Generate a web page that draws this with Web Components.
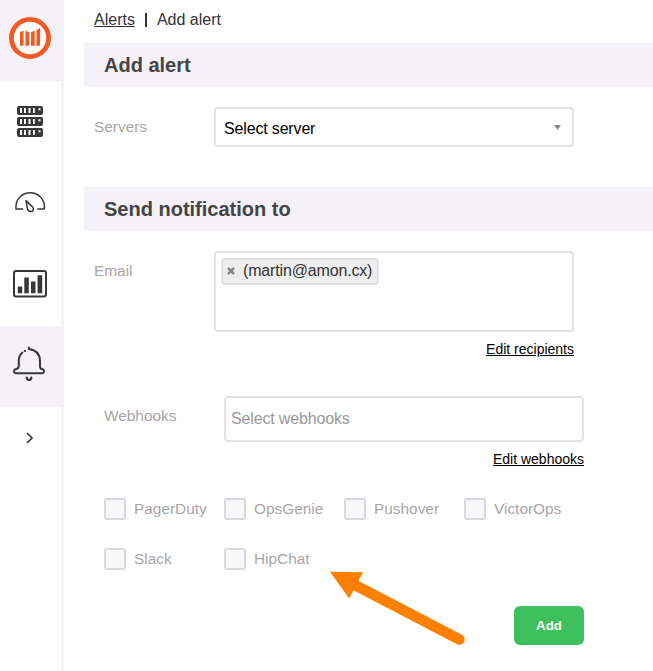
<!DOCTYPE html>
<html lang="en">
<head>
<meta charset="utf-8">
<title>Add alert</title>
<style>
html,body{margin:0;height:100%;background:#fff;overflow:hidden;font-family:"Liberation Sans",Arial,sans-serif;font-size:16px;color:#333}
</style>
</head>
<body>
<alert-app></alert-app>
<script>
const define = (name, html) => {
  const tpl = document.createElement('template');
  tpl.innerHTML = html;
  customElements.define(name, class extends HTMLElement {
    constructor() {
      super();
      this.attachShadow({ mode: 'open' }).appendChild(tpl.content.cloneNode(true));
    }
  });
};

define('nav-item', `
<style>
:host{display:flex;box-sizing:border-box;height:81px;width:61px;padding-right:1px;align-items:center;justify-content:center}
:host([active]){background:#f4f1f9}
:host([tall]){height:83px;padding-bottom:1px}
:host([short]){height:62px}
::slotted(svg){display:block}
</style><slot></slot>`);

define('side-nav', `
<style>
:host{display:flex;flex-direction:column;flex:none;box-sizing:border-box;width:64px;height:671px;border-right:3px solid #f4f1f9}
</style>
<nav-item active>
  <svg width="44" height="44" viewBox="8 16 44 44" style="margin:-5px 0 0 0"><circle cx="30" cy="38" r="18.6" fill="#fff" stroke="#f35a24" stroke-width="4.8"/><path fill="#f35a24" d="M20 32l3.500-1.400V45.700H20zM25.500 30.600l3.700 1.900v13.200h-3.700zM31 32.500l3.700-1.900v15.100H31zM36.400 30.200l3.700-2.500v18h-3.700z"/></svg>
</nav-item>
<nav-item>
  <svg width="26" height="31" viewBox="0 0 26 31"><g fill="#383838"><rect width="26" height="9" y="0" rx="2"/><rect width="26" height="9" y="11" rx="2"/><rect width="26" height="9" y="22" rx="2"/></g><g fill="#fff"><path d="M3 2h2v5H3zM7 2h2v5H7zM11.500 2h2v5h-2zM16 2h1.800v5H16zM21.500 2.200h2v2h-2z"/><path d="M3 13h2v5H3zM7 13h2v5H7zM11.500 13h2v5h-2zM16 13h1.800v5H16zM21.500 13.200h2v2h-2z"/><path d="M3 24h2v5H3zM7 24h2v5H7zM11.500 24h2v5h-2zM16 24h1.800v5H16zM21.500 24.200h2v2h-2z"/></g></svg>
</nav-item>
<nav-item>
  <svg width="32" height="22" viewBox="14 191 32 22" fill="none" stroke="#383838" stroke-width="1.500" stroke-linejoin="round" stroke-linecap="round" style="margin-top:-2px"><path d="M22.600 208.900H16v-2.500a14 13.500 0 0 1 28.400 0v2.500h-6.600"/><path d="M26 200.600l6.500 6.300c2 2.300.4 4.600-1.700 4.600-2 0-3.200-1.100-3.500-3.300z"/></svg>
</nav-item>
<nav-item tall>
  <svg width="34" height="28" viewBox="0 0 34 28"><rect x="1" y="1" width="32" height="25.500" rx="2" fill="none" stroke="#383838" stroke-width="2"/><path fill="#383838" d="M4.800 16.500h4.400v6.800H4.800zM11.300 7.500h4.500v15.800h-4.500zM18 11.600h4.500v11.700H18zM24.600 5.300h4.600v18h-4.600z"/></svg>
</nav-item>
<nav-item active>
  <svg width="36" height="38" viewBox="11 345 36 38" fill="none" stroke="#383838" stroke-width="2" stroke-linecap="round" stroke-linejoin="round" style="margin:-5px 2px 0 0"><path d="M28.800 347.600v1.300c7 1 11.200 5 11.200 12v5.500c0 1.700 1 2.600 2.600 2.900 1.900.5 1.900 4-.6 4H16c-2.500 0-2.500-3.500-.6-4 2.600-.3 3.400-1.200 3.400-3.500V361c0-3.800 1.200-6.700 3.600-8.500"/><path d="M24.700 351.100h.4"/><path d="M26.800 377.600c.2 3.200 4.300 3.200 4.500 0" stroke-width="2.200"/></svg>
</nav-item>
<nav-item short>
  <svg width="10" height="14" viewBox="0 0 10 14" fill="none" stroke="#383838" stroke-width="1.700"><path d="M2 2l5 5-5 5"/></svg>
</nav-item>`);

define('crumb-trail', `
<style>
:host{display:flex;height:43px;padding-left:30px;box-sizing:border-box;align-items:center;padding-bottom:4px;line-height:18px}
i{width:2px;height:14px;background:#333;margin:0 10px}
::slotted(a){text-decoration:underline;color:#333}
</style><slot name="parent"></slot><i></i><slot></slot>`);

define('section-title', `
<style>
:host{display:flex;align-items:center;height:44px;margin-left:20px;padding-left:20px;background:#f4f1f9;color:#444;font-weight:bold;font-size:20px}
</style><slot></slot>`);

define('form-row', `
<style>
:host{display:flex;padding-left:30px}
:host([inset]){padding-left:40px}
.l{width:120px;flex:none;font-size:15.4px;line-height:18px;padding-top:11px;color:#aaa5a8}
.c{width:360px;display:flex;flex-direction:column}
::slotted(a){align-self:flex-end;font-size:14px;line-height:16px;text-decoration:underline;color:#000;margin-top:9px}
</style><div class="l"><slot name="label"></slot></div><div class="c"><slot></slot></div>`);

define('input-box', `
<style>
:host{display:flex;box-sizing:border-box;border:2px solid #e2e1e8;border-radius:4px;background:#fff;color:#999;padding:0 5px;align-items:center;line-height:18px;letter-spacing:-.16px}
:host([kind=select]){height:40px;padding:4px 11px 0 8px;color:#000;justify-content:space-between}
:host([kind=tags]){height:81px;align-items:flex-start;padding-top:5px}
:host([kind=search]){height:46px}
svg{display:none}
:host([kind=select]) svg{display:block;margin-bottom:4px}
</style><slot></slot><svg width="7" height="5" viewBox="0 0 7 5"><path d="M0 0h7L3.500 5z" fill="#888"/></svg>`);

define('tag-chip', `
<style>
:host{display:flex;align-items:center;box-sizing:border-box;height:27px;border:2px solid #e2e1e8;border-radius:4px;background:#eee;color:#333;padding:0 5px 2px 4px}
svg{margin:1px 8px 0 0}
</style><svg width="8" height="8" viewBox="0 0 8 8"><path d="M1 1l6 6M7 1L1 7" stroke="#8a8a8a" stroke-width="2.500"/></svg><slot></slot>`);

define('check-option', `
<style>
:host{display:flex;align-items:center;height:22px;color:#aaa5a8;font-size:15.4px;line-height:18px}
i{box-sizing:border-box;width:22px;height:22px;border:2px solid #dad9df;border-radius:3px;background:#f8f8f8;margin-right:8px}
</style><i></i><slot></slot>`);

define('option-grid', `
<style>
:host{display:grid;grid-template-columns:repeat(4,120px);row-gap:28px;padding-left:40px}
</style><slot></slot>`);

define('primary-button', `
<style>
:host{display:flex;align-items:center;justify-content:center;width:70px;height:39px;border-radius:6px;background:#3dbf5e;color:#fff;font-weight:bold;font-size:13.300px}
</style><slot></slot>`);

define('pointer-arrow', `
<style>
:host{position:absolute;left:326px;top:568px;width:144px;height:80px}
svg{display:block}
</style><svg width="144" height="80" viewBox="326 568 144 80"><path d="M352 583.500L459.500 639.500" stroke="#ff8000" stroke-width="10.500" stroke-linecap="round"/><path d="M330 571.700l33 .6-13.800 26.300z" fill="#ff8000"/></svg>`);

define('alert-app', `
<style>
:host{display:flex;height:671px}
main{flex:1;display:flex;flex-direction:column}
.servers{margin:20px 0 40px}
.email{margin-top:20px}
.hooks{margin:39px 0 31px}
primary-button{margin:36px 0 0 450px}
</style>
<side-nav></side-nav>
<main>
  <crumb-trail><a slot="parent">Alerts</a><span>Add alert</span></crumb-trail>
  <section-title>Add alert</section-title>
  <form-row class="servers"><span slot="label">Servers</span><input-box kind="select"><span>Select server</span></input-box></form-row>
  <section-title>Send notification to</section-title>
  <form-row class="email"><span slot="label">Email</span><input-box kind="tags"><tag-chip>(martin@amon.cx)</tag-chip></input-box><a>Edit recipients</a></form-row>
  <form-row class="hooks" inset><span slot="label">Webhooks</span><input-box kind="search">Select webhooks</input-box><a>Edit webhooks</a></form-row>
  <option-grid>
    <check-option>PagerDuty</check-option><check-option>OpsGenie</check-option><check-option>Pushover</check-option><check-option>VictorOps</check-option>
    <check-option>Slack</check-option><check-option>HipChat</check-option>
  </option-grid>
  <primary-button>Add</primary-button>
</main>
<pointer-arrow></pointer-arrow>`);
</script>
</body>
</html>
